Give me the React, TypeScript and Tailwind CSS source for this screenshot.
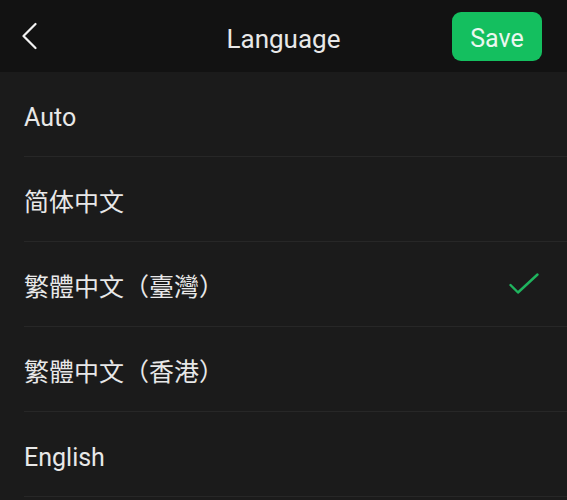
import { useState } from "react";

const languages = ["Auto", "简体中文", "繁體中文（臺灣）", "繁體中文（香港）", "English"];

const font = {
  fontFamily: '"Roboto", "Noto Sans CJK SC", sans-serif',
};

export default function App() {
  const [selected, setSelected] = useState(2);

  return (
    <div className="w-[567px] h-[500px] overflow-hidden bg-[#1b1b1b] text-[#e8e8e8]" style={font}>
      {/* Header */}
      <div className="h-[72px] bg-[#121212] flex items-center justify-between pl-[21px] pr-[25px] relative">
        <button className="w-[18px] h-[28px] flex items-center" aria-label="Back">
          <svg width="16" height="28" viewBox="0 0 16 28" fill="none">
            <path d="M14.5 2 L2.5 14 L14.5 26" stroke="#f2f2f2" strokeWidth="2.2" strokeLinecap="round" strokeLinejoin="round" />
          </svg>
        </button>
        <span className="absolute left-0 right-0 text-center text-[26px] leading-none pt-[6px] pointer-events-none">Language</span>
        <button className="w-[90px] h-[49px] rounded-[9px] bg-[#14bf5f] text-[25px] leading-none pt-[5px] text-[#eaf7ef] flex items-center justify-center">
          Save
        </button>
      </div>

      {/* List */}
      <div className="flex flex-col">
        {languages.map((lang, i) => (
          <div key={lang} className="pl-[24px]" onClick={() => setSelected(i)}>
            <div className="h-[85px] border-b border-[#272727] flex items-center justify-between pr-[28px]">
              <span className="text-[25px] leading-none pt-[6px]">{lang}</span>
              {selected === i && (
                <svg width="30" height="22" viewBox="0 0 30 22" fill="none">
                  <path d="M1.5 12 L9 19.5 L28.5 1.5" stroke="#1fb45e" strokeWidth="2.4" strokeLinecap="round" strokeLinejoin="round" />
                </svg>
              )}
            </div>
          </div>
        ))}
      </div>
    </div>
  );
}
